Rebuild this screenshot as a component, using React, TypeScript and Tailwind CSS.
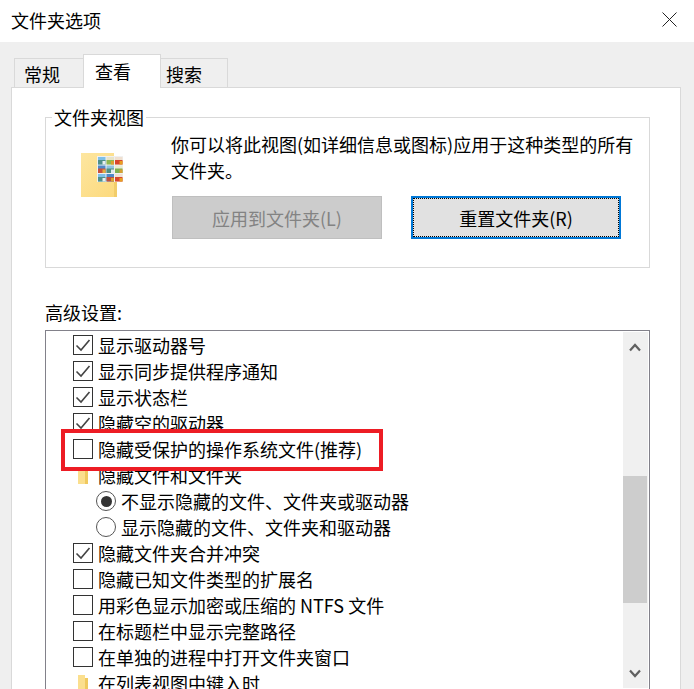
import React from 'react';

type Row =
  | { kind: 'check'; label: string; checked: boolean }
  | { kind: 'radio'; label: string; checked: boolean }
  | { kind: 'folder'; label: string };

const rows: Row[] = [
  { kind: 'check', label: '显示驱动器号', checked: true },
  { kind: 'check', label: '显示同步提供程序通知', checked: true },
  { kind: 'check', label: '显示状态栏', checked: true },
  { kind: 'check', label: '隐藏空的驱动器', checked: true },
  { kind: 'check', label: '隐藏受保护的操作系统文件(推荐)', checked: false },
  { kind: 'folder', label: '隐藏文件和文件夹' },
  { kind: 'radio', label: '不显示隐藏的文件、文件夹或驱动器', checked: true },
  { kind: 'radio', label: '显示隐藏的文件、文件夹和驱动器', checked: false },
  { kind: 'check', label: '隐藏文件夹合并冲突', checked: true },
  { kind: 'check', label: '隐藏已知文件类型的扩展名', checked: false },
  { kind: 'check', label: '用彩色显示加密或压缩的 NTFS 文件', checked: false },
  { kind: 'check', label: '在标题栏中显示完整路径', checked: false },
  { kind: 'check', label: '在单独的进程中打开文件夹窗口', checked: false },
  { kind: 'folder', label: '在列表视图中键入时' },
];

function CheckBox({ checked }: { checked: boolean }) {
  return (
    <span className="flex h-5 w-5 shrink-0 items-center justify-center border border-[#333]">
      {checked && (
        <svg width="16" height="14" viewBox="0 0 16 14" fill="none">
          <path d="M1.5 7.5 L6 12 L14.5 2" stroke="#444" strokeWidth="1.6" />
        </svg>
      )}
    </span>
  );
}

function Radio({ checked }: { checked: boolean }) {
  return (
    <span className="flex h-5 w-5 shrink-0 items-center justify-center rounded-full border border-[#555]">
      {checked && <span className="h-[11px] w-[11px] rounded-full bg-[#333]" />}
    </span>
  );
}

function SmallFolder() {
  return (
    <svg width="10" height="17" viewBox="0 0 10 17" className="shrink-0">
      <path d="M0 0 H7 V3 H10 V17 H0 Z" fill="#fbdf8e" />
      <path d="M7 3 H10 V17 H7 Z" fill="#f0c95f" />
    </svg>
  );
}

// Each thumbnail: sky, ground, accent
const thumbs = [
  ['#7fc0e8', '#4f8f8a', '#e8eef0'],
  ['#e8e4c8', '#8fb84f', '#d8a030'],
  ['#f0e0d0', '#d8452c', '#e8a020'],
  ['#4f88c8', '#c8503c', '#e0b040'],
  ['#8fc4e0', '#4f8f80', '#dfe8ec'],
  ['#e8ecd0', '#7fb04f', '#d8a030'],
  ['#7fc0e8', '#4f8f8a', '#e8eef0'],
  ['#4f88c8', '#c0503c', '#d8a030'],
  ['#f0e0d0', '#d8452c', '#e8a020'],
];

function FolderThumbs() {
  return (
    <svg width="42" height="44" viewBox="0 0 42 44" className="shrink-0">
      <defs>
        <linearGradient id="folderFill" x1="0" y1="0" x2="1" y2="1">
          <stop offset="0" stopColor="#fde6a0" />
          <stop offset="1" stopColor="#fcd97c" />
        </linearGradient>
      </defs>
      <path d="M0 0 H33 V3 H36 V44 H0 Z" fill="url(#folderFill)" />
      <path d="M33 3 H36 V44 H33 Z" fill="#f2cd6a" />
      <rect x="16" y="3" width="26" height="26" fill="#f0f0f0" />
      {thumbs.map(([sky, ground, accent], i) => {
        const x = 17 + (i % 3) * 8.5;
        const y = 4 + Math.floor(i / 3) * 8.5;
        return (
          <g key={i}>
            <rect x={x} y={y} width="7.5" height="7.5" fill={sky} />
            <rect x={x} y={y + 3} width="7.5" height="4.5" fill={ground} />
            <rect x={x + 4.5} y={y + 4} width="3" height="3.5" fill={accent} />
          </g>
        );
      })}
    </svg>
  );
}

export default function App() {
  return (
    <div className="flex h-[689px] w-[694px] flex-col overflow-hidden bg-[#efefef] text-[18px] leading-[26px] text-black font-['Noto_Sans_CJK_SC','Noto_Sans_CJK_JP',sans-serif]">
      {/* Title bar */}
      <div className="flex h-[42px] shrink-0 items-center justify-between bg-white pb-[3px] pl-[11px] pr-[17px]">
        <span>文件夹选项</span>
        <svg width="15" height="15" viewBox="0 0 15 15" fill="none">
          <path d="M0.5 0.5 L14.5 14.5 M14.5 0.5 L0.5 14.5" stroke="#222" strokeWidth="1" />
        </svg>
      </div>

      {/* Tabs */}
      <div className="relative z-10 -mb-px mt-3 flex h-[34px] shrink-0 items-end pl-[14px]">
        <div className="flex h-[30px] w-[69px] items-center border border-b-0 border-r-0 border-[#d9d9d9] pl-[9px]">常规</div>
        <div className="flex h-[34px] w-[78px] items-start border border-b-0 border-[#d9d9d9] bg-white pl-[11px] pt-[3px]">查看</div>
        <div className="flex h-[30px] w-[67px] items-center border border-b-0 border-l-0 border-[#d9d9d9] pl-[5px]">搜索</div>
      </div>

      {/* Panel */}
      <div className="ml-[11px] flex w-[670px] flex-1 flex-col border border-b-0 border-[#d9d9d9] bg-white pl-[33px] pr-[30px] pt-[16px]">
        <fieldset className="h-[164px] w-[605px] shrink-0 border border-[#d9d9d9] pl-[6px]">
          <legend className="px-[2px] leading-[26px]">文件夹视图</legend>
          <div className="flex pl-[29px]">
            <div className="pt-[23px]">
              <FolderThumbs />
            </div>
            <div className="ml-[48px] flex flex-col pt-[1px]">
              <p className="w-[470px]">你可以将此视图(如详细信息或图标)应用于这种类型的所有文件夹。</p>
              <div className="ml-px mt-[13px] flex gap-[29px]">
                <button className="h-[43px] w-[210px] border border-[#bfbfbf] bg-[#cccccc] text-[#838383]">应用到文件夹(L)</button>
                <button className="h-[43px] w-[210px] border-2 border-[#0078d7] bg-[#e1e1e1] outline-dotted outline-1 -outline-offset-3 outline-black">重置文件夹(R)</button>
              </div>
            </div>
          </div>
        </fieldset>

        <div className="mt-[31px] h-[26px] shrink-0">高级设置:</div>

        {/* Advanced settings list */}
        <div className="relative mt-[5px] flex h-[400px] w-[605px] shrink-0 overflow-hidden border border-[#82818a] bg-white pt-px">
          <div className="flex-1 pl-[27px]">
            {rows.map((row) => (
              <div key={row.label} className="flex h-[26px] items-center gap-[5px] whitespace-nowrap">
                {row.kind === 'check' && <CheckBox checked={row.checked} />}
                {row.kind === 'radio' && (
                  <span className="ml-[23px]">
                    <Radio checked={row.checked} />
                  </span>
                )}
                {row.kind === 'folder' && (
                  <span className="flex w-5 justify-center">
                    <SmallFolder />
                  </span>
                )}
                <span>{row.label}</span>
              </div>
            ))}
          </div>

          {/* Scrollbar */}
          <div className="mr-px flex h-[356px] w-[25px] shrink-0 flex-col bg-[#f0f0f0]">
            <div className="flex h-[25px] shrink-0 items-center justify-center pr-[1px] pt-[5px]">
              <svg width="12" height="9" viewBox="0 0 12 9" fill="none">
                <path d="M1 7.5 L6 2 L11 7.5" stroke="#606060" strokeWidth="2.2" />
              </svg>
            </div>
            <div className="h-[119px] shrink-0" />
            <div className="mr-px h-[127px] shrink-0 bg-[#cdcdcd]" />
            <div className="flex-1" />
            <div className="flex h-[25px] shrink-0 items-center justify-center pb-[4px] pr-[1px]">
              <svg width="12" height="9" viewBox="0 0 12 9" fill="none">
                <path d="M1 1.5 L6 7 L11 1.5" stroke="#606060" strokeWidth="2.2" />
              </svg>
            </div>
          </div>

          {/* Red highlight drawn over the list */}
          <div className="pointer-events-none absolute left-[15px] top-[98px] h-[42px] w-[322px] border-[4px] border-[#ed1c24]" />
        </div>
      </div>
    </div>
  );
}
